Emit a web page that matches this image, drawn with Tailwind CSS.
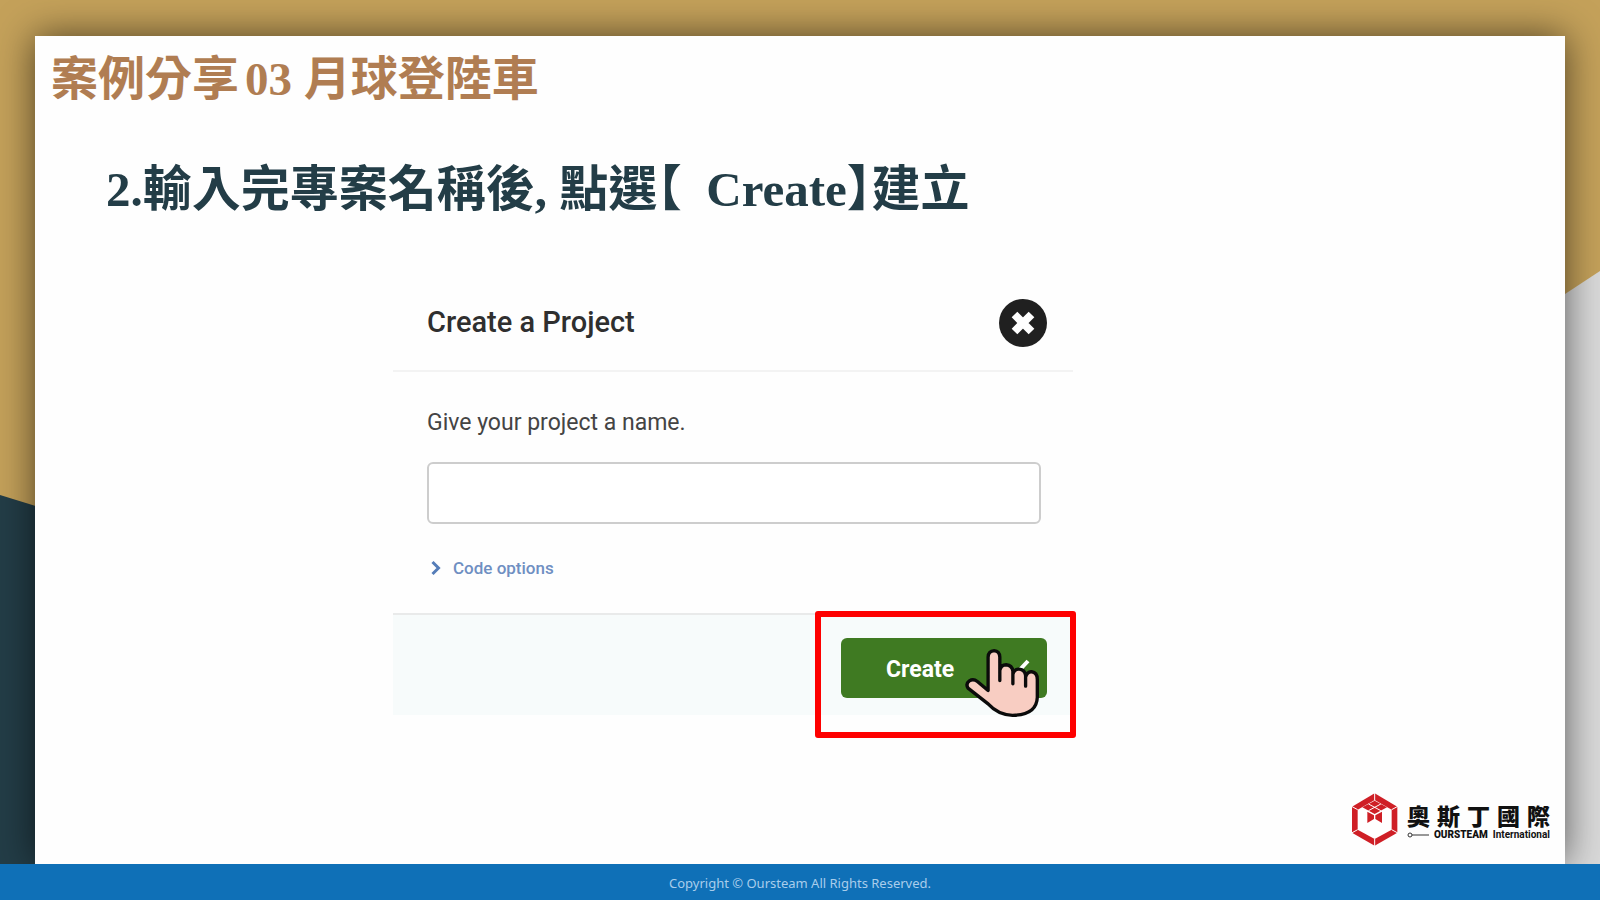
<!DOCTYPE html>
<html lang="zh-Hant">
<head>
    <meta charset="UTF-8">
    <meta name="viewport" content="width=device-width, initial-scale=1.0">
    <title>案例分享03 月球登陸車</title>
    <script src="https://cdn.jsdelivr.net/npm/@tailwindcss/browser@4"></script>
</head>
<body>
    <div class="relative isolate min-h-screen flex flex-col overflow-hidden bg-[#c4a15a]">
        <!-- Background shapes -->
        <svg class="absolute inset-0 -z-10 w-full h-full" viewBox="0 0 1600 900" preserveAspectRatio="none" aria-hidden="true">
            <polygon points="0,495 800,742 800,900 0,900" fill="#233d47" />
            <polygon points="1600,271 800,797 800,900 1600,900" fill="#d9d9d9" />
        </svg>

        <main class="flex-1 flex flex-col mx-[35px] mt-9 bg-[#fefefe] shadow-[0_0_36px_rgba(0,0,0,0.6)]">
            <h1 class="pl-4 pt-[13px] text-[47px] leading-[60px] font-bold text-[#b07d52] font-['Liberation_Serif','Noto_Sans_CJK_TC',serif]">案例分享<span class="ml-1.5">03</span> 月球登陸車</h1>
            <h2 class="pl-[71px] pt-[47px] text-[49px] leading-[68px] font-bold text-[#233d47] font-['Liberation_Serif','Noto_Sans_CJK_TC',serif]">2.輸入完專案名稱後, 點選<span class="[font-feature-settings:'halt']">【</span>&nbsp; Create<span class="[font-feature-settings:'halt']">】</span>建立</h2>

            <section class="w-[680px] ml-[358px] mt-[51px] font-[Roboto,sans-serif]">
                <header class="h-[97px] pl-[34px] pr-[26px] flex items-center justify-between border-b-2 border-[#f3f3f3]">
                    <h3 class="text-[29px] font-medium text-[#2f2f2f]">Create a Project</h3>
                    <button type="button" aria-label="Close">
                        <svg class="size-12" viewBox="0 0 48 48">
                            <circle cx="24" cy="24" r="24" fill="#202020" />
                            <path d="M15.500 15.500L32.500 32.500M32.500 15.500L15.500 32.500" stroke="#fff" stroke-width="8" />
                        </svg>
                    </button>
                </header>
                <div class="pl-[34px] pr-8 pt-[33px]">
                    <label for="projectName" class="block text-[23px] leading-9 text-[#444]">Give your project a name.</label>
                    <input id="projectName" type="text" class="block w-full h-[62px] mt-[21px] px-4 text-[23px] rounded-md border-2 border-[#cdcdcd] bg-white">
                    <button type="button" class="mt-7 ml-1 flex items-center gap-3 text-[17px] leading-8 font-medium text-[#6f8fc2]">
                        <svg class="w-[10px] h-4" viewBox="0 0 10 16" fill="none">
                            <path d="M1.500 2L7.500 8L1.500 14" stroke="#557db8" stroke-width="3" />
                        </svg>
                        Code options
                    </button>
                </div>
                <footer class="relative h-[102px] mt-[29px] pt-[23px] pr-[26px] flex items-start justify-end border-t-2 border-[#e9eaea] bg-[#f7fbfb]">
                    <button type="button" class="w-[206px] h-[60px] pl-[45px] pr-4 pt-1 flex items-center justify-between rounded-md bg-[#3f7a22] text-[23px] font-bold text-white">
                        Create
                        <svg class="w-7 h-6" viewBox="0 0 28 24" fill="none">
                            <path d="M3 13L10 19L25 3" stroke="#fff" stroke-width="4" />
                        </svg>
                    </button>
                    <div class="absolute -top-[4px] -right-[3px] w-[261px] h-[127px] rounded-[3px] border-[6px] border-[#fe0000]"></div>
                    <!-- Pointing hand -->
                    <svg class="absolute top-8 right-8 w-[77px] h-[71px]" viewBox="490 140 230 212" fill="#f8cdc2" stroke="#0b0b0b" stroke-width="10" stroke-linecap="round" stroke-linejoin="round">
                        <path d="M562 270V170Q563 152 580 151Q596 152 597 170V240V210Q600 193 616 193Q634 195 636 212V250V222Q640 205 655 206Q672 208 674 225V257V230Q679 213 692 214Q709 216 709 237V290Q707 343 635 344Q592 343 562 310L502 263Q494 250 506 241Q518 234 530 243Z" />
                    </svg>
                </footer>
            </section>

            <div class="mt-auto ml-auto mr-[15px] mb-3 flex items-center gap-1">
                <svg class="w-14 h-16" viewBox="0 0 168 192" aria-hidden="true">
                    <polygon points="83,16 151,56 151,134 83,173 15,134 15,56" fill="#cf1f26" />
                    <polygon points="83,36 134,65 134,125 83,153 32,125 32,65" fill="#fff" />
                    <path d="M83 38L120 58L83 78L46 58ZM61 71L81 82V93L61 105ZM105 71L85 82V93L105 105Z" fill="#cf1f26" />
                    <path d="M83 10V36M83 153V178M10 53L32 65M156 53L134 65M10 137L32 125M156 137L134 125M64.500 48L101.500 68M101.500 48L64.500 68" stroke="#fff" stroke-width="3" fill="none" />
                </svg>
                <div class="w-[143px] pt-px text-[#111]">
                    <div class="flex justify-between text-[23px] leading-7 font-black font-['Noto_Sans_CJK_TC',sans-serif]">
                        <span>奧</span><span>斯</span><span>丁</span><span>國</span><span>際</span>
                    </div>
                    <div class="flex items-center justify-between text-[10px] leading-3 font-bold whitespace-nowrap font-[Roboto,sans-serif]">
                        <svg class="w-[22px] h-[6px]" viewBox="0 0 22 6" fill="none" stroke="#333">
                            <circle cx="3" cy="3" r="2" />
                            <path d="M5 3H22" />
                        </svg>
                        <span class="font-black">OURSTEAM</span>
                        <span>International</span>
                    </div>
                </div>
            </div>
        </main>

        <footer class="relative h-9 pt-[3px] flex items-center justify-center bg-[#0f70b7] text-[13px] text-[#a9cdeb] font-['Noto_Sans',sans-serif]">
            Copyright © Oursteam All Rights Reserved.
        </footer>
    </div>
</body>
</html>
